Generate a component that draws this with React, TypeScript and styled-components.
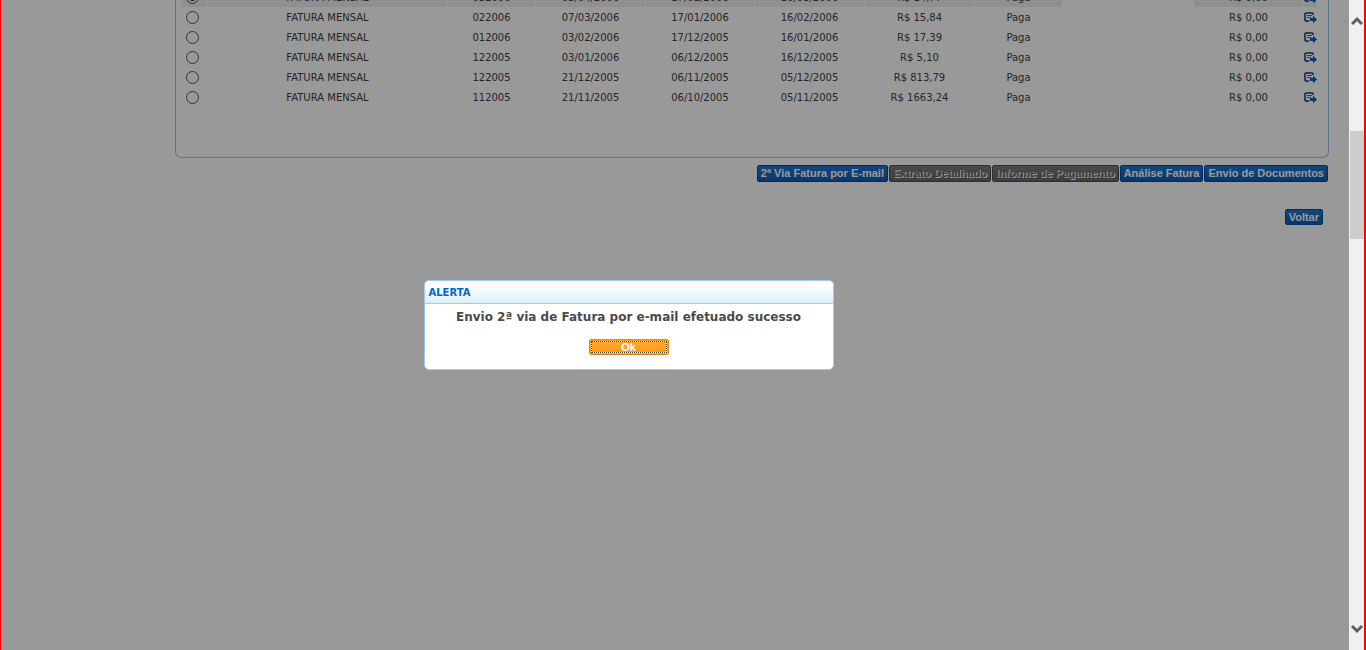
import React from "react";
import styled, { createGlobalStyle, css } from "styled-components";

const GlobalStyle = createGlobalStyle`
  *, *::before, *::after { box-sizing: border-box; }
  body {
    margin: 0;
    background: #fff;
    font-family: Verdana, "DejaVu Sans", sans-serif;
    font-size: 10px;
    color: #404040;
  }
`;

const Shell = styled.div`
  position: relative;
  display: flex;
  height: 100vh;
  overflow: hidden;
  border-left: 1px solid #f00;
  border-right: 2px solid #f00;
`;

const Viewport = styled.main`
  flex: 1;
  min-width: 0;
  overflow: hidden;
`;

const Content = styled.div`
  margin: -13px 20px 0 174px;
`;

const Panel = styled.section`
  padding: 0 10px 50px 5px;
  border: 1px solid #9fc4ea;
  border-top: 0;
  border-radius: 0 0 6px 6px;
`;

const InvoiceTable = styled.table`
  width: 100%;
  table-layout: fixed;
  border-spacing: 1px 0;
`;

const Row = styled.tr<{ $shaded?: boolean }>`
  height: 20px;
  --cell: ${(p) => (p.$shaded ? "#efefef" : "transparent")};
`;

const Cell = styled.td<{ $bare?: boolean }>`
  padding: 2px 0 0;
  line-height: 18px;
  text-align: center;
  white-space: nowrap;
  background: ${(p) => (p.$bare ? "transparent" : "var(--cell)")};
`;

const ControlCell = styled(Cell)<{ $indent?: boolean }>`
  padding: 0 0 0 ${(p) => (p.$indent ? 4 : 0)}px;
  text-align: left;
`;

const Radio = styled.input`
  appearance: none;
  display: block;
  width: 13px;
  height: 13px;
  margin: 0;
  border: 1px solid #555;
  border-radius: 50%;
  &:checked {
    background: radial-gradient(circle, #333 0 3px, transparent 4px);
  }
`;

const IconButton = styled.button`
  display: block;
  width: 13px;
  height: 11px;
  margin: 0;
  padding: 0;
  border: 0;
  background: none;
  svg { display: block; }
`;

const Actions = styled.div<{ $inset?: boolean }>`
  display: flex;
  justify-content: flex-end;
  gap: 1px;
  margin-top: ${(p) => (p.$inset ? 27 : 7)}px;
  padding-right: ${(p) => (p.$inset ? 6 : 1)}px;
`;

const buttonText = css<{ $short?: boolean }>`
  padding: 0 3px;
  font: bold 11px/15px "Liberation Sans", Arial, sans-serif;
  line-height: ${(p) => (p.$short ? 14 : 15)}px;
  white-space: nowrap;
  border-radius: 2px;
`;

const ActionButton = styled.button<{ $short?: boolean }>`
  ${buttonText}
  color: #fff;
  background: linear-gradient(#2475cf, #0a5cba);
  border: 1px solid #004a9c;
  &:disabled {
    color: #6d6d6d;
    text-shadow: 1px 1px 0 #fff;
    background: linear-gradient(#7e7e7e, #666);
    border-color: #4e4e4e;
  }
`;

const Scrollbar = styled.div`
  display: flex;
  flex-direction: column;
  width: 15px;
  background: #f0f0f0;
`;

const ScrollArrow = styled.button`
  height: 42px;
  margin: 0;
  padding: 0 0 0 2px;
  border: 0;
  background: none;
  svg { display: block; }
`;

const Track = styled.div`
  flex: 1;
  padding: 89px 0 0 1px;
`;

const Thumb = styled.div`
  height: 108px;
  background: #cdcdcd;
`;

const Overlay = styled.div`
  position: absolute;
  inset: 0 15px 0 0;
  background: rgba(0, 0, 0, 0.4);
`;

const Dialog = styled.section`
  position: absolute;
  top: calc(50% - 45px);
  left: calc(50% - 259px);
  width: 410px;
  overflow: hidden;
  text-align: center;
  background: #fff;
  border: 1px solid #a4c9ee;
  border-radius: 5px;
`;

const DialogTitle = styled.h2`
  margin: 0;
  padding: 2px 4px 0;
  font-size: 10px;
  line-height: 20px;
  text-align: left;
  color: #0066cc;
  background: linear-gradient(#fff 20%, #d9f0fa);
  border-bottom: 1px solid #a4c9ee;
`;

const Message = styled.p`
  margin: 0;
  padding: 4px 0 13px;
  font-size: 12px;
  font-weight: bold;
  line-height: 18px;
  color: #4a4a4a;
`;

const OkButton = styled.button<{ $short?: boolean }>`
  ${buttonText}
  width: 80px;
  margin-bottom: 14px;
  padding: 0;
  color: #fff;
  background: linear-gradient(#ffa938, #ff9a14);
  border: 1px solid #e48a0a;
  box-shadow: inset 0 0 0 1px #ffa026, inset 0 0 0 2px #fff;
  outline: 1px dotted #444;
  outline-offset: -3px;
`;

const InvoiceIcon = () => (
  <svg width="13" height="11" viewBox="0 0 13 11" shapeRendering="crispEdges" aria-hidden="true">
    <path d="M1 0h8v1h1v2H8V2H2v6h3v2H1V9H0V1h1z" fill="#50678c" />
    <path d="M3 3h5v1H3zM3 5h4v1H3z" fill="#50678c" />
    <path d="M6 6h3V4h1v1h1v1h1v1h1v1h-1v1h-1v1h-1v1H9V9H6z" fill="#0066cc" />
  </svg>
);

const columns = [25, 239, 87, 109, 108, 109, 109, 87, 0, 109, 13];

const invoices = [
  ["032006", "03/04/2006", "17/02/2006", "16/03/2006", "R$ 14,77"],
  ["022006", "07/03/2006", "17/01/2006", "16/02/2006", "R$ 15,84"],
  ["012006", "03/02/2006", "17/12/2005", "16/01/2006", "R$ 17,39"],
  ["122005", "03/01/2006", "06/12/2005", "16/12/2005", "R$ 5,10"],
  ["122005", "21/12/2005", "06/11/2005", "05/12/2005", "R$ 813,79"],
  ["112005", "21/11/2005", "06/10/2005", "05/11/2005", "R$ 1663,24"],
];

export default function App() {
  return (
    <>
      <GlobalStyle />
      <Shell>
        <Viewport>
          <Content>
            <Panel>
              <InvoiceTable>
                <colgroup>
                  {columns.map((w, i) => (
                    <col key={i} width={w || undefined} />
                  ))}
                </colgroup>
                <tbody>
                  {invoices.map((values, i) => (
                    <Row key={i} $shaded={i === 0}>
                      <ControlCell $indent>
                        <Radio
                          type="radio"
                          name="fatura"
                          aria-label={`Fatura ${values[0]}`}
                          defaultChecked={i === 0}
                        />
                      </ControlCell>
                      <Cell>FATURA MENSAL</Cell>
                      {values.map((value, n) => (
                        <Cell key={n}>{value}</Cell>
                      ))}
                      <Cell>Paga</Cell>
                      <Cell $bare />
                      <Cell>R$ 0,00</Cell>
                      <ControlCell>
                        <IconButton type="button" aria-label="Detalhar fatura">
                          <InvoiceIcon />
                        </IconButton>
                      </ControlCell>
                    </Row>
                  ))}
                </tbody>
              </InvoiceTable>
            </Panel>
            <Actions>
              <ActionButton type="button">2ª Via Fatura por E-mail</ActionButton>
              <ActionButton type="button" disabled>Extrato Detalhado</ActionButton>
              <ActionButton type="button" disabled>Informe de Pagamento</ActionButton>
              <ActionButton type="button">Análise Fatura</ActionButton>
              <ActionButton type="button">Envio de Documentos</ActionButton>
            </Actions>
            <Actions $inset>
              <ActionButton type="button" $short>Voltar</ActionButton>
            </Actions>
          </Content>
        </Viewport>
        <Scrollbar>
          <ScrollArrow type="button" aria-label="Rolar para cima">
            <svg width="12" height="10" viewBox="0 0 12 10" fill="none" stroke="#606060" strokeWidth="3" aria-hidden="true">
              <path d="M1 8L6 3L11 8" />
            </svg>
          </ScrollArrow>
          <Track>
            <Thumb />
          </Track>
          <ScrollArrow type="button" aria-label="Rolar para baixo">
            <svg width="12" height="10" viewBox="0 0 12 10" fill="none" stroke="#606060" strokeWidth="3" aria-hidden="true">
              <path d="M1 2L6 7L11 2" />
            </svg>
          </ScrollArrow>
        </Scrollbar>
        <Overlay />
        <Dialog role="alertdialog" aria-labelledby="alerta-titulo">
          <DialogTitle id="alerta-titulo">ALERTA</DialogTitle>
          <Message>Envio 2ª via de Fatura por e-mail efetuado sucesso</Message>
          <OkButton type="button" $short>Ok</OkButton>
        </Dialog>
      </Shell>
    </>
  );
}
